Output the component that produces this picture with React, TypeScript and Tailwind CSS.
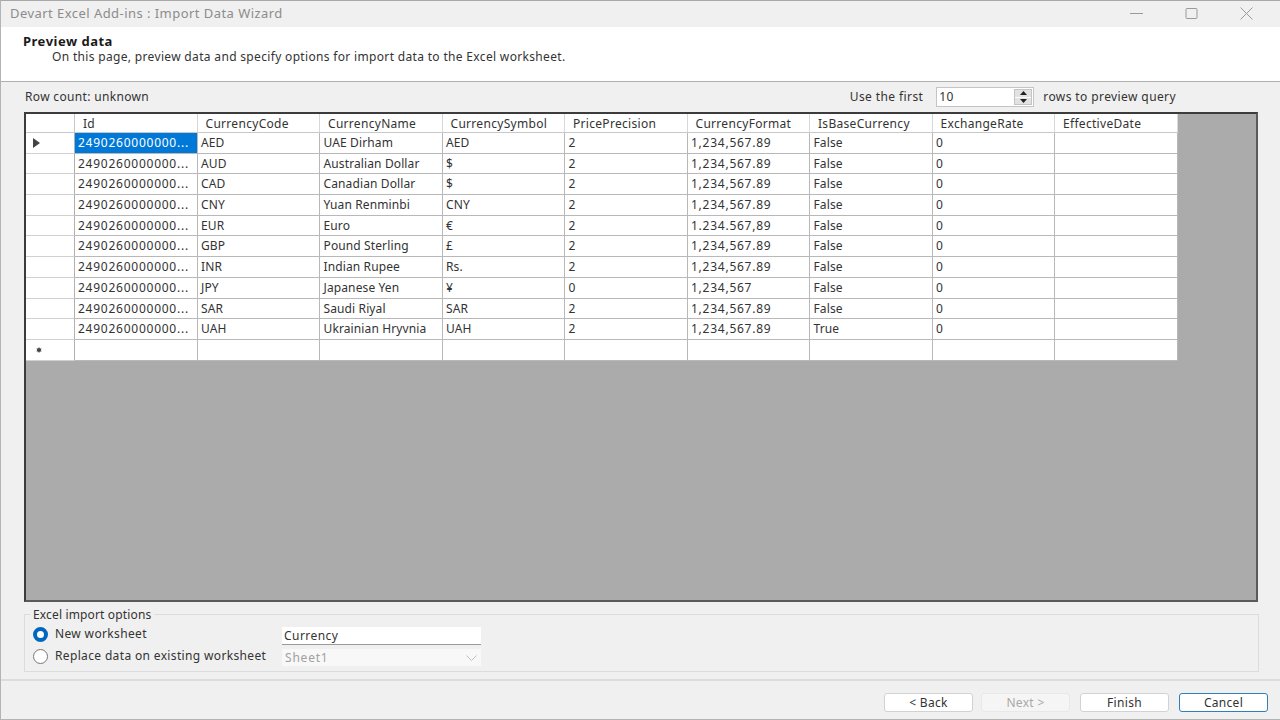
const columns = [
  "Id",
  "CurrencyCode",
  "CurrencyName",
  "CurrencySymbol",
  "PricePrecision",
  "CurrencyFormat",
  "IsBaseCurrency",
  "ExchangeRate",
  "EffectiveDate",
];

const id = "2490260000000...";

const rows = [
  [id, "AED", "UAE Dirham", "AED", "2", "1,234,567.89", "False", "0", ""],
  [id, "AUD", "Australian Dollar", "$", "2", "1,234,567.89", "False", "0", ""],
  [id, "CAD", "Canadian Dollar", "$", "2", "1,234,567.89", "False", "0", ""],
  [id, "CNY", "Yuan Renminbi", "CNY", "2", "1,234,567.89", "False", "0", ""],
  [id, "EUR", "Euro", "€", "2", "1.234.567,89", "False", "0", ""],
  [id, "GBP", "Pound Sterling", "£", "2", "1,234,567.89", "False", "0", ""],
  [id, "INR", "Indian Rupee", "Rs.", "2", "1,234,567.89", "False", "0", ""],
  [id, "JPY", "Japanese Yen", "¥", "0", "1,234,567", "False", "0", ""],
  [id, "SAR", "Saudi Riyal", "SAR", "2", "1,234,567.89", "False", "0", ""],
  [id, "UAH", "Ukrainian Hryvnia", "UAH", "2", "1,234,567.89", "True", "0", ""],
  ["", "", "", "", "", "", "", "", ""],
];

function WizardButton({
  label,
  disabled,
  focused,
}: {
  label: string;
  disabled?: boolean;
  focused?: boolean;
}) {
  return (
    <button
      className={`w-[89px] h-[19px] rounded-[3px] border text-[12px] tracking-[0.3px] leading-none flex items-center justify-center ${
        focused
          ? "bg-white border-[#2f7fb8] text-[#333]"
          : disabled
            ? "bg-[#f5f5f5] border-[#e8e8e8] text-[#a8a8a8]"
            : "bg-white border-[#d2d2d2] text-[#333]"
      }`}
    >
      {label}
    </button>
  );
}

export default function App() {
  return (
    <div className="w-[1280px] h-[720px] flex flex-col overflow-hidden bg-[#f0f0f0] border-t border-t-[#a8a8a8] border-l border-l-[#b4b4b4] text-[12px] text-[#333] font-['Noto_Sans','DejaVu_Sans',sans-serif]">
      {/* Title bar */}
      <div className="h-[26px] shrink-0 flex items-center justify-between pl-[9px] pr-[27px]">
        <span className="text-[13px] tracking-[0.45px] text-[#8c8c8c]">
          Devart Excel Add-ins : Import Data Wizard
        </span>
        <div className="flex items-center gap-[42px] pb-[2px] text-[#9a9a9a]">
          <svg width="13" height="13" viewBox="0 0 13 13">
            <path d="M0 6.5h13" stroke="currentColor" fill="none" />
          </svg>
          <svg width="13" height="13" viewBox="0 0 13 13">
            <rect x="1" y="1.5" width="11" height="10" rx="1" stroke="currentColor" fill="none" />
          </svg>
          <svg width="13" height="13" viewBox="0 0 13 13">
            <path d="M0.5 0.5l12 12M12.5 0.5l-12 12" stroke="currentColor" fill="none" />
          </svg>
        </div>
      </div>

      {/* Page header */}
      <div className="h-[55px] shrink-0 bg-white border-b border-b-[#b0b0b0] pl-[22px] pt-[6px]">
        <div className="font-bold text-[13px] tracking-[0.5px] leading-[17px] text-[#1a1a1a]">Preview data</div>
        <div className="pl-[29px] leading-[14px] tracking-[0.33px]">
          On this page, preview data and specify options for import data to the Excel worksheet.
        </div>
      </div>

      {/* Row count and preview limit */}
      <div className="h-[30px] shrink-0 flex items-center justify-between pl-[24px] pr-[104px]">
        <span className="tracking-[0.33px]">Row count: unknown</span>
        <div className="flex items-center">
          <span className="tracking-[0.4px]">Use the first</span>
          <div className="ml-[13px] w-[98px] h-[20px] flex items-center justify-between border border-[#c4c4c4] bg-white pl-[2px] pr-[1px]">
            <span className="tracking-[0.4px]">10</span>
            <div className="w-[18px] h-[16px] flex flex-col bg-[#e2e2e2] border border-[#c4c4c4] divide-y divide-white">
              <div className="flex-1 flex items-center justify-center">
                <svg width="7" height="4" viewBox="0 0 7 4">
                  <path d="M3.5 0L7 4H0z" fill="#222" />
                </svg>
              </div>
              <div className="flex-1 flex items-center justify-center">
                <svg width="7" height="4" viewBox="0 0 7 4">
                  <path d="M0 0h7L3.5 4z" fill="#222" />
                </svg>
              </div>
            </div>
          </div>
          <span className="ml-[9px] tracking-[0.4px]">rows to preview query</span>
        </div>
      </div>

      {/* Data grid */}
      <div className="ml-[23px] mr-[22px] h-[490px] shrink-0 bg-[#ababab] border-2 border-[#3c3c3c] border-b-[#5a5a5a] border-r-[#5a5a5a]">
        <div className="grid grid-cols-[49px_repeat(9,122.5px)] w-fit bg-white">
          <div className="h-[19px] border-r border-r-[#c8c8c8] border-b border-b-[#c8c8c8]" />
          {columns.map((col) => (
            <div
              key={col}
              className="h-[19px] pl-[8px] leading-[19px] tracking-[0.3px] border-r border-r-[#d8d8d8] border-b border-b-[#c8c8c8] last:border-r-0"
            >
              {col}
            </div>
          ))}
          {rows.map((row, r) => (
            <div key={r} className="contents">
              <div className="h-[20.7px] flex items-center border-r border-r-[#b0b0b0] border-b border-b-[#d0d0d0]">
                {r === 0 && (
                  <svg className="ml-[7px]" width="7" height="10" viewBox="0 0 7 10">
                    <path d="M0 0l7 5-7 5z" fill="#444" />
                  </svg>
                )}
                {r === rows.length - 1 && (
                  <svg className="ml-[10px]" width="6" height="6" viewBox="0 0 6 6">
                    <path d="M3 0l.9 1.5L5.6 1.5 4.8 3l.8 1.5H3.9L3 6l-.9-1.5H.4L1.2 3 .4 1.5h1.7z" fill="#444" />
                  </svg>
                )}
              </div>
              {row.map((cell, c) => (
                <div
                  key={c}
                  className={`h-[20.7px] leading-[20px] whitespace-nowrap border-r border-r-[#b8b8b8] border-b border-b-[#b8b8b8] ${
                    r === 0 && c === 0 ? "bg-[#0078d7] text-white" : ""
                  } ${c === 0 ? "pl-[3px] tracking-[0.75px]" : "pl-[3.5px]"} ${
                    c === 5 ? "tracking-[0.75px]" : c === 0 ? "" : "tracking-[0.12px]"
                  }`}
                >
                  {cell}
                </div>
              ))}
            </div>
          ))}
        </div>
      </div>

      {/* Import options */}
      <div className="relative ml-[23px] mr-[21px] mt-[12px] h-[58px] shrink-0 border border-[#dcdcdc] pl-[8px] pt-[11px]">
        <span className="absolute left-[5px] -top-[7px] bg-[#f0f0f0] px-[3px] leading-[14px] tracking-[0.15px]">
          Excel import options
        </span>
        <div className="flex">
          <div className="w-[249px] flex flex-col gap-[6px]">
            <label className="flex items-center gap-[7px] h-[16px]">
              <span className="size-[15px] rounded-full border-[4px] border-[#0067c0] bg-white" />
              <span className="tracking-[0.35px]">New worksheet</span>
            </label>
            <label className="flex items-center gap-[7px] h-[16px]">
              <span className="size-[15px] rounded-full border border-[#777] bg-white" />
              <span className="tracking-[0.35px]">Replace data on existing worksheet</span>
            </label>
          </div>
          <div className="w-[199px] flex flex-col gap-[4px] mt-[1px]">
            <div className="h-[18px] bg-white border-b border-b-[#999] pl-[2px] leading-[17px] tracking-[0.45px]">
              Currency
            </div>
            <div className="h-[17px] bg-[#f8f8f8] flex items-center justify-between pl-[3px] pr-[4px] text-[#a0a0a0] tracking-[0.8px]">
              <span>Sheet1</span>
              <svg width="11" height="6" viewBox="0 0 11 6">
                <path d="M0.5 0.5l5 5 5-5" stroke="#c0c0c0" fill="none" />
              </svg>
            </div>
          </div>
        </div>
      </div>

      {/* Footer buttons */}
      <div className="mt-[7px] flex-1 border-t-2 border-t-[#dcdcdc] border-b border-b-[#b4b4b4] flex items-start justify-end pt-[12px] pr-[12px]">
        <WizardButton label="< Back" />
        <div className="w-[8px]" />
        <WizardButton label="Next >" disabled />
        <div className="w-[10px]" />
        <WizardButton label="Finish" />
        <div className="w-[10px]" />
        <WizardButton label="Cancel" focused />
      </div>
    </div>
  );
}
